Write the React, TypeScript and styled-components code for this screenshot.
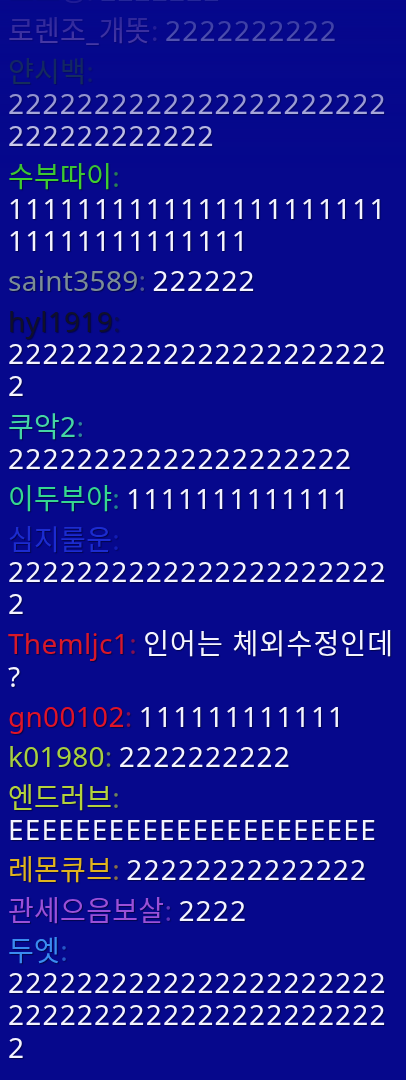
import React from "react";
import styled, { createGlobalStyle } from "styled-components";

const GlobalStyle = createGlobalStyle`
  html, body {
    margin: 0;
    padding: 0;
    background: #06088c;
  }
  #root {
    width: 406px;
    height: 1080px;
  }
`;

const Overlay = styled.div`
  box-sizing: border-box;
  width: 406px;
  height: 1080px;
  padding: 0 10px 17px 8px;
  display: flex;
  flex-direction: column;
  justify-content: flex-end;
  gap: 8px;
  overflow: hidden;
  background: #06088c;
  font-family: "Noto Sans", "Noto Sans CJK KR", sans-serif;
  font-size: 28px;
  line-height: 32.3px;
  letter-spacing: 1.2px;
  -webkit-mask-image: linear-gradient(to bottom, rgba(0, 0, 0, 0.12) 0px, #000 180px);
  mask-image: linear-gradient(to bottom, rgba(0, 0, 0, 0.12) 0px, #000 180px);
`;

const Message = styled.div`
  flex: none;
  overflow-wrap: break-word;
  word-spacing: -2px;
  text-shadow: 1px 1px 1px rgba(0, 0, 0, 0.45);
`;

const Name = styled.span<{ $color: string }>`
  color: ${(p) => p.$color};
  letter-spacing: 0.3px;
`;

const Colon = styled.span<{ $color: string }>`
  color: ${(p) => p.$color};
  opacity: 0.6;
  letter-spacing: 0;
`;

const Text = styled.span<{ $anywhere?: boolean }>`
  color: #f4f4ff;
  word-spacing: 0;
  line-break: ${(p) => (p.$anywhere ? "anywhere" : "auto")};
`;

type Chat = { name: string; color: string; text: string; anywhere?: boolean };

const chats: Chat[] = [
  { name: "모모링", color: "#c8a0d8", text: "2222222" },
  { name: "로렌조_개똣", color: "#c79ad6", text: "2222222222" },
  { name: "얀시백", color: "#24502f", text: "2222222222222222222222222222222222" },
  { name: "수부따이", color: "#3fd02f", text: "111111111111111111111111111111111111" },
  { name: "saint3589", color: "#7b8d96", text: "222222" },
  { name: "hyl1919", color: "#10102a", text: "22222222222222222222222" },
  { name: "쿠악2", color: "#45d6a5", text: "22222222222222222222" },
  { name: "이두부야", color: "#35d890", text: "1111111111111" },
  { name: "심지룰운", color: "#1c2cd0", text: "22222222222222222222222" },
  { name: "Themljc1", color: "#d8182a", text: "인어는 체외수정인데?", anywhere: true },
  { name: "gn00102", color: "#e01428", text: "111111111111" },
  { name: "k01980", color: "#a8d040", text: "2222222222" },
  { name: "엔드러브", color: "#b4d23c", text: "EEEEEEEEEEEEEEEEEEEEEE" },
  { name: "레몬큐브", color: "#e0b41e", text: "22222222222222" },
  { name: "관세으음보살", color: "#9b50d8", text: "2222" },
  { name: "두엣", color: "#3a8cf0", text: "222222222222222222222222222222222222222222222" },
];

export default function App() {
  return (
    <>
      <GlobalStyle />
      <Overlay>
        {chats.map((c, i) => (
          <Message key={i}>
            <Name $color={c.color}>{c.name}</Name>
            <Colon $color={c.color}>:</Colon>{" "}
            <Text $anywhere={c.anywhere}>{c.text}</Text>
          </Message>
        ))}
      </Overlay>
    </>
  );
}
